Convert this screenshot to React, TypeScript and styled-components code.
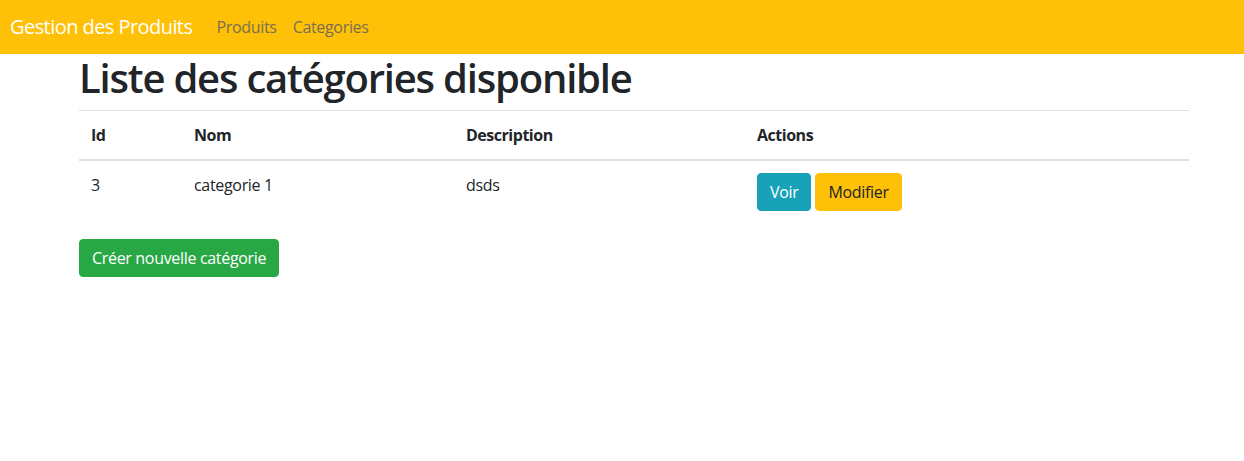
import React from "react";
import styled, { createGlobalStyle } from "styled-components";

const Global = createGlobalStyle`
  html, body { margin: 0; padding: 0; background: #fff; }
  body {
    font-family: "Segoe UI", "Open Sans", "Noto Sans", sans-serif;
    font-size: 16px;
    line-height: 1.5;
    color: #212529;
    letter-spacing: -0.02em;
  }
  * { box-sizing: border-box; }
`;

const Navbar = styled.nav`
  height: 54px;
  background: #ffc107;
  display: flex;
  align-items: center;
  padding: 0 10px;
`;

const Brand = styled.a`
  font-size: 20px;
  color: #fff;
  text-decoration: none;
  margin-right: 16px;
  line-height: 30px;
  letter-spacing: -0.028em;
`;

const NavLink = styled.a`
  color: #7a6f52;
  text-decoration: none;
  padding: 8px;
`;

const Container = styled.main`
  width: 1110px;
  margin-left: 79px;
`;

const Title = styled.h1`
  margin: 0 0 8px;
  font-size: 40px;
  font-weight: 600;
  line-height: 1.2;
  letter-spacing: -0.03em;
`;

const Table = styled.table`
  width: 100%;
  border-collapse: collapse;
  margin-bottom: 16px;
`;

const Th = styled.th<{ $w: number }>`
  width: ${(p) => p.$w}px;
  text-align: left;
  font-weight: 700;
  letter-spacing: -0.03em;
  padding: 12px;
  border-top: 1px solid #dee2e6;
  border-bottom: 2px solid #dee2e6;
  vertical-align: bottom;
`;

const Td = styled.td`
  padding: 12px;
  border-top: 1px solid #dee2e6;
  vertical-align: top;
`;

const Actions = styled.div`
  display: flex;
  gap: 4px;
`;

const Button = styled.button<{ $bg: string; $fg: string }>`
  font-family: inherit;
  font-size: 16px;
  line-height: 1.5;
  letter-spacing: inherit;
  padding: 6px 12px;
  border: 1px solid ${(p) => p.$bg};
  border-radius: 4px;
  background: ${(p) => p.$bg};
  color: ${(p) => p.$fg};
  cursor: pointer;
`;

export default function App() {
  return (
    <>
      <Global />
      <Navbar>
        <Brand href="#">Gestion des Produits</Brand>
        <NavLink href="#">Produits</NavLink>
        <NavLink href="#">Categories</NavLink>
      </Navbar>
      <Container>
        <Title>Liste des catégories disponible</Title>
        <Table>
          <thead>
            <tr>
              <Th $w={103}>Id</Th>
              <Th $w={272}>Nom</Th>
              <Th $w={291}>Description</Th>
              <Th $w={444}>Actions</Th>
            </tr>
          </thead>
          <tbody>
            <tr>
              <Td>3</Td>
              <Td>categorie 1</Td>
              <Td>dsds</Td>
              <Td>
                <Actions>
                  <Button $bg="#17a2b8" $fg="#fff">Voir</Button>
                  <Button $bg="#ffc107" $fg="#212529">Modifier</Button>
                </Actions>
              </Td>
            </tr>
          </tbody>
        </Table>
        <Button $bg="#28a745" $fg="#fff">Créer nouvelle catégorie</Button>
      </Container>
    </>
  );
}
